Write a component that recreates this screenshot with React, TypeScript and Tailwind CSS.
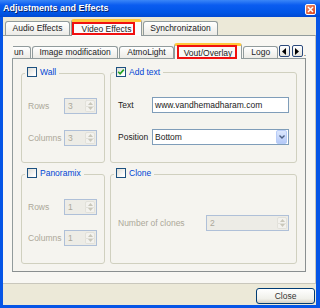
import React from "react";

function Check({ checked = false }: { checked?: boolean }) {
  return (
    <span className="inline-flex w-[10px] h-[10px] shrink-0 items-center justify-center border border-[#1C5180] bg-[linear-gradient(135deg,#DCDCD6,#FFFFFF_85%)]">
      {checked && (
        <svg width="8" height="8" viewBox="0 0 8 8">
          <path d="M1.2 3.8 L3.1 5.8 L6.8 1.6" fill="none" stroke="#21A121" strokeWidth="1.6" />
        </svg>
      )}
    </span>
  );
}

function Spin({ value, className }: { value: string; className: string }) {
  return (
    <div className={`flex h-[16px] border border-[#AFC0D8] bg-[#EDECE6] ${className}`}>
      <span className="flex-1 pl-[3px] leading-[14px] text-[#ACA899]">{value}</span>
      <span className="flex flex-col w-[10px] my-[1px] mr-[1px]">
        <span className="flex-1 flex items-center justify-center rounded-t-[2px] border border-[#E2E1DA] bg-[#F3F2EE]">
          <svg width="5" height="3" viewBox="0 0 5 3">
            <path d="M0 3 L2.5 0 L5 3 Z" fill="#C9C7BA" />
          </svg>
        </span>
        <span className="flex-1 flex items-center justify-center rounded-b-[2px] border border-t-0 border-[#E2E1DA] bg-[#F3F2EE]">
          <svg width="5" height="3" viewBox="0 0 5 3">
            <path d="M0 0 L2.5 3 L5 0 Z" fill="#C9C7BA" />
          </svg>
        </span>
      </span>
    </div>
  );
}

function Group({
  label,
  checked,
  children,
}: {
  label: string;
  checked?: boolean;
  children: React.ReactNode;
}) {
  return (
    <fieldset className="min-w-0 h-full rounded-[3px] border border-[#D0D0BF] px-[6px]">
      <legend className="ml-[-3px] px-[2px] leading-[10px]">
        <span className="inline-flex items-center gap-[3px] pr-[1px]">
          <Check checked={checked} />
          <span className="text-[#0046D5]">{label}</span>
        </span>
      </legend>
      {children}
    </fieldset>
  );
}

function OuterTab({ label, w }: { label: string; w: string }) {
  return (
    <div
      className={`${w} h-[14px] flex items-center justify-center rounded-t-[3px] border border-b-0 border-[#919B9C] bg-[linear-gradient(to_bottom,#FFFFFF,#ECEBE6)] text-[#222]`}
    >
      {label}
    </div>
  );
}

export default function App() {
  return (
    <div className="w-[320px] h-[308px] flex flex-col overflow-hidden bg-[#0655E6] font-['Liberation_Sans',Arial,sans-serif] text-[8.5px] text-black">
      {/* Title bar */}
      <div className="h-[17px] flex items-center justify-between pl-[3px] pr-[4px] bg-[linear-gradient(to_bottom,#3A86F7,#0A5CF0_30%,#0055E5_75%,#0149D2)]">
        <span className="text-white font-bold text-[9px] [text-shadow:1px_1px_0_#0A246A]">
          Adjustments and Effects
        </span>
        <span className="w-[11px] h-[11px] mt-[1px] flex items-center justify-center rounded-[2px] border border-white bg-[linear-gradient(135deg,#F08F6E,#D9441C)]">
          <svg width="7" height="7" viewBox="0 0 7 7">
            <path d="M1 1 L6 6 M6 1 L1 6" stroke="white" strokeWidth="1.5" />
          </svg>
        </span>
      </div>

      {/* Client area */}
      <div className="flex-1 flex flex-col ml-[3px] mr-[4px] mb-[3px] bg-[#ECE9D8]">
        {/* Outer tabs */}
        <div className="h-[18px] flex items-end pl-[2px] gap-px">
          <OuterTab label="Audio Effects" w="w-[65px]" />
          <div className="relative w-[71px] h-[17px] flex items-center justify-center rounded-t-[3px] border-x border-[#919B9C] bg-[#FCFCFE] mb-[-1px] z-10 border-t-[3px] border-t-[#FFC73C]">
            <span className="mt-[1px] text-[#222]">Video Effects</span>
            <span className="absolute left-[0px] right-[6px] top-0 bottom-[1px] border-2 border-[#F01010]" />
          </div>
          <OuterTab label="Synchronization" w="w-[75px]" />
        </div>

        {/* Outer pane */}
        <div className="flex flex-col h-[249px] border-t border-r border-b border-t-[#919B9C] border-r-[#C9C7BC] border-b-[#C9C7BC] bg-[#F8F7F3] pl-[9px] pr-[9px] pt-[7px]">
          {/* Inner tabs */}
          <div className="h-[15px] flex items-end pl-px">
            <div className="w-[18px] h-[12px] flex items-center pl-px overflow-hidden rounded-tr-[3px] border-t border-r border-[#919B9C] bg-[linear-gradient(to_bottom,#FFFFFF,#ECEBE6)] text-[#222]">
              un
            </div>
            <div className="ml-px w-[88px] h-[12px] flex items-center justify-center rounded-t-[3px] border border-b-0 border-[#919B9C] bg-[linear-gradient(to_bottom,#FFFFFF,#ECEBE6)] text-[#222]">
              Image modification
            </div>
            <div className="ml-px w-[55px] h-[12px] flex items-center justify-center rounded-t-[3px] border border-b-0 border-[#919B9C] bg-[linear-gradient(to_bottom,#FFFFFF,#ECEBE6)] text-[#222]">
              AtmoLight
            </div>
            <div className="relative w-[70px] h-[16px] mb-[-1px] z-10 flex items-center justify-center rounded-t-[3px] border-x border-[#919B9C] border-t-[3px] border-t-[#FFC73C] bg-[#F9F9F7]">
              <span className="mt-[1px] text-[#222]">Vout/Overlay</span>
              <span className="absolute left-[2px] right-[4px] top-[-1px] bottom-0 border-2 border-[#F01010]" />
            </div>
            <div className="ml-px w-[35px] h-[12px] flex items-center justify-center rounded-t-[3px] border border-b-0 border-[#919B9C] bg-[linear-gradient(to_bottom,#FFFFFF,#ECEBE6)] text-[#222]">
              Logo
            </div>
            <div className="ml-px mb-[1px] w-[11px] h-[12px] flex items-center justify-center rounded-[2px] border border-[#2C4A7C] bg-[linear-gradient(to_bottom,#FFFFFF,#E4E3DC)]">
              <svg width="4" height="7" viewBox="0 0 4 7">
                <path d="M4 0 L0 3.5 L4 7 Z" fill="#000" />
              </svg>
            </div>
            <div className="ml-[2px] mb-[1px] w-[11px] h-[12px] flex items-center justify-center rounded-[2px] border border-[#2C4A7C] bg-[linear-gradient(to_bottom,#FFFFFF,#E4E3DC)]">
              <svg width="4" height="7" viewBox="0 0 4 7">
                <path d="M0 0 L4 3.5 L0 7 Z" fill="#000" />
              </svg>
            </div>
            <span className="ml-px mb-[1px] leading-[8px] text-[#333]">.</span>
          </div>

          {/* Inner pane */}
          <div className="h-[214px] grid grid-cols-[84px_187px] grid-rows-[96px_96px] gap-[5px] pt-[8px] pl-[8px] border border-[#919B9C] border-r-[#8A8F90] border-b-[#8A8F90] bg-[#F5F4EF]">
            <Group label="Wall">
              <div className="mt-[19px] flex flex-col gap-[16px]">
                <div className="flex items-center">
                  <span className="w-[36px] text-[#ACA899]">Rows</span>
                  <Spin value="3" className="w-[33px]" />
                </div>
                <div className="flex items-center">
                  <span className="w-[36px] text-[#ACA899]">Columns</span>
                  <Spin value="3" className="w-[33px]" />
                </div>
              </div>
            </Group>

            <Group label="Add text" checked>
              <div className="mt-[19px] flex flex-col gap-[16px] pl-px">
                <div className="flex items-center">
                  <span className="w-[34px] text-[#222]">Text</span>
                  <div className="w-[137px] h-[16px] flex items-center pl-[2px] border border-[#7F9DB9] bg-white text-[#222]">
                    www.vandhemadharam.com
                  </div>
                </div>
                <div className="flex items-center">
                  <span className="w-[34px] text-[#222]">Position</span>
                  <div className="w-[137px] h-[16px] flex items-center border border-[#7F9DB9] bg-white text-[#222]">
                    <span className="flex-1 pl-[2px]">Bottom</span>
                    <span className="w-[11px] h-[14px] mr-px flex items-center justify-center rounded-[2px] border border-[#B9CDF7] bg-[linear-gradient(to_bottom,#DCE7FD,#B5C9F7)]">
                      <svg width="6" height="4" viewBox="0 0 6 4">
                        <path d="M0.5 0.5 L3 3 L5.5 0.5" fill="none" stroke="#4D6185" strokeWidth="1.4" />
                      </svg>
                    </span>
                  </div>
                </div>
              </div>
            </Group>

            <Group label="Panoramix">
              <div className="mt-[19px] flex flex-col gap-[15px]">
                <div className="flex items-center">
                  <span className="w-[36px] text-[#ACA899]">Rows</span>
                  <Spin value="1" className="w-[33px]" />
                </div>
                <div className="flex items-center">
                  <span className="w-[36px] text-[#ACA899]">Columns</span>
                  <Spin value="1" className="w-[33px]" />
                </div>
              </div>
            </Group>

            <Group label="Clone">
              <div className="mt-[35px] flex items-center pl-px">
                <span className="w-[88px] text-[#ACA899]">Number of clones</span>
                <Spin value="2" className="w-[83px]" />
              </div>
            </Group>
          </div>
        </div>

        {/* Bottom bar */}
        <div className="flex-1 flex justify-end items-start pt-[4px] pr-px">
          <button className="w-[59px] h-[16px] flex items-center justify-center rounded-[3px] border border-[#003C74] bg-[linear-gradient(to_bottom,#FFFFFF,#F0F0EA_70%,#D6D0C5)] text-[#333]">
            Close
          </button>
        </div>
      </div>
    </div>
  );
}
